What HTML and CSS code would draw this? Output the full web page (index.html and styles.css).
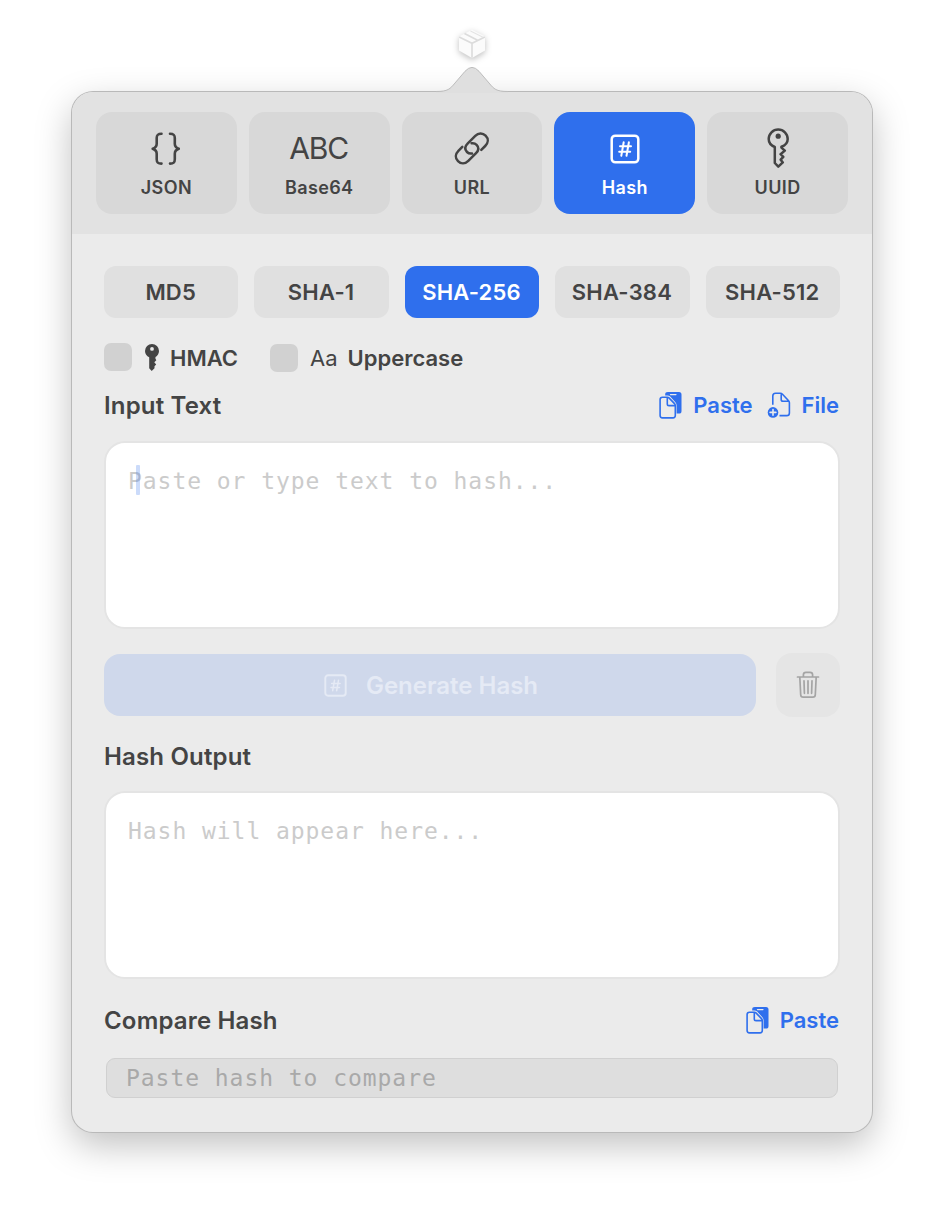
FILE: index.html
```
<!DOCTYPE html>
<html lang="en">
<head>
<meta charset="utf-8">
<title>Hash</title>
<link rel="stylesheet" href="styles.css">
</head>
<body>
<svg class="defs" width="0" height="0" aria-hidden="true">
  <symbol id="hash-square" viewBox="0 0 30 30">
    <rect x="1.700" y="1.700" width="26.600" height="26.600" rx="3.600" fill="none" stroke="currentColor" stroke-width="2.500"/>
    <path d="M13.700 8.300 11.300 21.700M18.900 8.300 16.500 21.700M10 12.300H21M9.200 17.700H20.200" fill="none" stroke="currentColor" stroke-width="2" stroke-linecap="round"/>
  </symbol>
  <symbol id="paste" viewBox="0 0 24 28">
    <path d="M6.200 4.500V3.300Q6.200 1 8.800 1H20Q22.500 1 22.500 3.600V19.900Q22.500 22.500 20 22.500H17.600V14.300Q17.600 12.500 16.400 11.200L11.200 5.600Q10.100 4.500 8.500 4.500Z" fill="currentColor"/>
    <path d="M11.500 3.600H16.900" stroke="#ebebeb" stroke-width="1.400" stroke-linecap="round"/>
    <path d="M3.400 6.300H8.300Q9.400 6.300 10.200 7.100L15.500 12.600Q16.300 13.400 16.300 14.500V24.600Q16.300 26.900 14 26.900H3.400Q1.100 26.900 1.100 24.600V8.600Q1.100 6.300 3.400 6.300Z" fill="#ebebeb" stroke="currentColor" stroke-width="1.600"/>
    <path d="M8.300 6.600V12.900Q8.300 14.600 10 14.600H16" fill="none" stroke="currentColor" stroke-width="1.600"/>
  </symbol>
</svg>
<div class="menu-icon">
  <svg width="28" height="30" viewBox="0 0 28 30">
    <path d="M14 .8 27 7.500V21.600L14 29 1 21.600V7.500Z" fill="#fbfbfb"/>
    <path d="M1.200 8 14 14.300 26.800 8M14 14.300V28.800M6.500 4.600 19.600 11.200" fill="none" stroke="#dcdcdc" stroke-width="1.700"/>
    <path d="M12.500 2 25 8.300" fill="none" stroke="#e4e4e4" stroke-width="1.200"/>
  </svg>
</div>
<main class="popover">
  <svg class="arrow" width="72" height="30" viewBox="436 63 72 30">
    <path d="M436 93V91.500C448 91.500 450 89 455 83L465 71.300Q472 63.500 479 71.300L489 83C494 89 496 91.500 508 91.500V93Z" fill="#dfdfdf"/>
    <path d="M436 91.500C448 91.500 450 89 455 83L465 71.300Q472 63.500 479 71.300L489 83C494 89 496 91.500 508 91.500" fill="none" stroke="#bdbdbd"/>
  </svg>
  <nav class="tabs">
    <button class="tab">
      <svg class="tab-icon" width="40" height="40" viewBox="0 0 40 40" fill="none" stroke="currentColor" stroke-width="2.600" stroke-linecap="round" stroke-linejoin="round"><path d="M15.500 5.700C11.500 5.700 10.700 7.100 10.700 10V15.800C10.700 18.800 9.400 19.900 6.700 20.800 9.400 21.700 10.700 22.800 10.700 25.800V31.300C10.700 34.200 11.500 35.600 15.500 35.600M24 5.700C28 5.700 28.800 7.100 28.800 10V15.800C28.800 18.800 30.100 19.900 32.800 20.800 30.100 21.700 28.800 22.800 28.800 25.800V31.300C28.800 34.200 28 35.600 24 35.600"/></svg>
      <span>JSON</span>
    </button>
    <button class="tab">
      <span class="tab-icon abc">ABC</span>
      <span>Base64</span>
    </button>
    <button class="tab">
      <svg class="tab-icon" width="40" height="40" viewBox="0 0 40 40" fill="none" stroke="currentColor" stroke-width="2.500" stroke-linecap="round" stroke-linejoin="round"><path d="M10.300 18.900 6.400 22.800C3.200 26 3 30.200 6 33.200S13.200 36 16.300 32.900L23.800 25.400C27 22.200 27 19.200 24.600 16.800 23.300 15.500 21.700 15 19.600 15.300M29.300 21.900 33.200 18C36.400 14.800 36.600 10.600 33.600 7.600S26.400 4.800 23.300 7.900L15.800 15.400C12.600 18.600 12.600 21.600 15 24 16.300 25.300 17.900 25.800 20 25.500"/></svg>
      <span>URL</span>
    </button>
    <button class="tab selected">
      <svg class="tab-icon hash"><use href="#hash-square"/></svg>
      <span>Hash</span>
    </button>
    <button class="tab">
      <svg class="tab-icon key" width="40" height="40" viewBox="0 0 40 40" fill="none" stroke="currentColor" stroke-width="2.500" stroke-linejoin="round"><path d="M16.800 19V35L20.300 38.600 24.800 34.400 22.700 31.700 25.300 28.800 22.600 26.200 26.800 22.600 23.400 19.600V18.700C27.500 17.300 29.700 14.200 29.700 11A9.500 9.500 0 1 0 10.700 11C10.700 14.200 13 17.500 16.800 19Z"/><circle cx="20.200" cy="8.200" r="2.600" fill="currentColor" stroke="none"/></svg>
      <span>UUID</span>
    </button>
  </nav>
  <section class="content">
    <div class="algorithms">
      <button class="algo">MD5</button>
      <button class="algo">SHA-1</button>
      <button class="algo selected">SHA-256</button>
      <button class="algo">SHA-384</button>
      <button class="algo">SHA-512</button>
    </div>
    <div class="options">
      <label class="option hmac">
        <span class="check"></span>
        <svg width="14" height="27" viewBox="0 0 14 27"><path fill="currentColor" fill-rule="evenodd" d="M4.200 13.200C1.700 12.200 0 9.900 0 7A7 7 0 0 1 14 7C14 9.600 12.600 11.800 10.500 13L10.400 14.600 11.300 16.200 9.300 18.300 11.200 20.400 9.500 22.300V24.200L6.700 26.900 4.200 24.300ZM7 3A1.900 1.900 0 1 0 7 6.800 1.900 1.900 0 0 0 7 3Z"/></svg>
        <span class="option-text">HMAC</span>
      </label>
      <label class="option upper">
        <span class="check"></span>
        <span class="aa">Aa</span>
        <span class="option-text">Uppercase</span>
      </label>
    </div>
    <div class="heading input-heading">
      <h2>Input Text</h2>
      <div class="actions">
        <button class="link"><svg width="24" height="28"><use href="#paste"/></svg><span>Paste</span></button>
        <button class="link file"><svg width="24" height="27" viewBox="0 0 24 27" fill="none" stroke="currentColor" stroke-width="1.600"><path d="M5.800 12.800V4Q5.800 1.300 8.500 1.300H13.300Q14.600 1.300 15.500 2.200L21.600 8.700Q22.400 9.600 22.400 10.800V20.900Q22.400 23.600 19.700 23.600H12.500M14.200 1.600V7.400Q14.200 9.300 16.100 9.300H22"/><circle cx="6" cy="20.400" r="5.300" fill="currentColor" stroke="none"/><path d="M6 17.500V23.300M3.100 20.400H8.900" stroke="#ebebeb" stroke-linecap="round"/></svg><span>File</span></button>
      </div>
    </div>
    <div class="area">Paste or type text to hash...<span class="caret"></span></div>
    <div class="generate-row">
      <button class="generate"><svg width="23" height="23"><use href="#hash-square"/></svg><span>Generate Hash</span></button>
      <button class="trash"><svg width="24" height="28" viewBox="0 0 24 28" fill="none" stroke="currentColor" stroke-width="1.700" stroke-linecap="round" stroke-linejoin="round"><path d="M1.500 6H22.500M3.800 6 4.700 23.800Q4.800 26.200 7.200 26.200H16.800Q19.200 26.200 19.300 23.800L20.200 6M7.400 6V3.800Q7.400 1.300 9.900 1.300H14.100Q16.600 1.300 16.600 3.800V6M8 9.800 8.400 22.300M12 9.800V22.300M16 9.800 15.600 22.300" /></svg></button>
    </div>
    <div class="heading output-heading"><h2>Hash Output</h2></div>
    <div class="area">Hash will appear here...</div>
    <div class="heading compare-heading">
      <h2>Compare Hash</h2>
      <div class="actions"><button class="link"><svg width="24" height="28"><use href="#paste"/></svg><span>Paste</span></button></div>
    </div>
    <div class="compare">Paste hash to compare</div>
  </section>
</main>
</body>
</html>
```
FILE: styles.css
```
* { box-sizing: border-box; }
body {
  margin: 0;
  height: 1212px;
  background: #fff;
  color: #444;
  font-family: Inter, "Liberation Sans", sans-serif;
  display: flex;
  flex-direction: column;
  align-items: center;
  overflow: hidden;
}
.defs { position: absolute; }
button {
  border: 0;
  padding: 0;
  margin: 0;
  background: none;
  color: inherit;
  font: inherit;
}
svg { display: block; flex: none; }
h2 { margin: 0; font-size: 24px; font-weight: 600; line-height: 32px; letter-spacing: .17px; }

.menu-icon {
  height: 92px;
  padding-top: 29px;
  flex: none;
}
.menu-icon svg { filter: drop-shadow(0 2px 3px rgba(0, 0, 0, .25)); }

.popover {
  position: relative;
  flex: none;
  width: 800px;
  height: 1040px;
  border-radius: 21px;
  background: #ebebeb;
  box-shadow: 0 0 0 1px #b9b9b9, 0 13px 36px rgba(0, 0, 0, .25);
}
.arrow { position: absolute; left: 364px; top: -29px; }

.tabs {
  display: grid;
  grid-template-columns: repeat(5, 1fr);
  gap: 12px;
  height: 142px;
  padding: 20px 24px;
  border-radius: 21px 21px 0 0;
  background: #e2e2e2;
}
.tab {
  display: flex;
  flex-direction: column;
  align-items: center;
  gap: 8px;
  height: 102px;
  padding-top: 16px;
  border-radius: 16px;
  background: #d8d8d8;
  font-size: 18px;
  font-weight: 580;
  line-height: 24px;
  letter-spacing: .4px;
}
.tab-icon { height: 40px; }
.tab-icon.hash { width: 30px; height: 30px; margin: 6px 0 4px; }
.tab-icon.key { margin-right: 0; }
.abc {
  font-size: 30px;
  font-weight: 400;
  line-height: 40px;
  letter-spacing: -1.2px;
  margin-right: 1px;
}
.tab.selected { font-weight: 600; }
.selected { background: #2f6fed; color: #fff; }

.content { padding: 32px; }
.algorithms { display: grid; grid-template-columns: repeat(5, 1fr); gap: 16px; }
.algo {
  height: 52px;
  padding-right: 1px;
  border-radius: 12px;
  background: #e0e0e0;
  font-size: 22px;
  font-weight: 580;
  letter-spacing: .2px;
}
.algo.selected { background: #2f6fed; font-weight: 600; }

.options { display: flex; height: 30px; margin-top: 25px; }
.option { display: flex; align-items: center; height: 29px; font-size: 22px; line-height: 30px; }
.check { width: 28px; height: 28px; border-radius: 7px; background: #d1d1d1; }
.hmac { width: 166px; }
.hmac .check { margin-bottom: 1px; }
.hmac svg { margin: 0 11px 0 13px; }
.aa { margin: 1px 10px 0 12px; font-weight: 370; }
.option-text { margin-top: 1px; font-weight: 580; }

.heading { display: flex; justify-content: space-between; height: 30px; }
.input-heading { margin: 17px 0 21px; }
.output-heading { margin: 24px 0 20px; }
.compare-heading { margin: 26px 0 23px; }
.actions { display: flex; gap: 14px; padding-right: 1px; }
.link {
  display: flex;
  align-items: center;
  gap: 10px;
  color: #2f6fed;
  font-size: 22px;
  font-weight: 590;
  line-height: 30px;
}
.file { gap: 11px; }
.area {
  position: relative;
  height: 188px;
  padding: 22px;
  border: 2px solid #e4e4e4;
  border-radius: 21px;
  background: #fff;
  color: #cbcbcb;
  font: 23px/32px "DejaVu Sans Mono", monospace;
  letter-spacing: .95px;
}
.caret {
  position: absolute;
  left: 30px;
  top: 22px;
  width: 4px;
  height: 30px;
  border-radius: 1px;
  background: rgba(47, 111, 237, .25);
}
.generate-row { display: flex; align-items: center; gap: 20px; height: 64px; margin-top: 24px; }
.generate {
  display: flex;
  flex: 1;
  align-items: center;
  justify-content: center;
  gap: 19px;
  height: 62px;
  padding-left: 2px;
  border-radius: 16px;
  background: #cfd8eb;
  color: #e5eaf5;
  font-size: 24px;
  font-weight: 600;
}
.trash {
  display: grid;
  place-items: center;
  width: 64px;
  height: 64px;
  border-radius: 16px;
  background: #e5e5e5;
  color: #a4a4a4;
}
.compare {
  height: 40px;
  margin: 0 2px;
  padding-left: 19px;
  border: 1px solid #d0d0d0;
  border-radius: 9px;
  background: #dedede;
  color: #a9a9a9;
  font: 23px/38px "DejaVu Sans Mono", monospace;
  letter-spacing: .95px;
}
```
